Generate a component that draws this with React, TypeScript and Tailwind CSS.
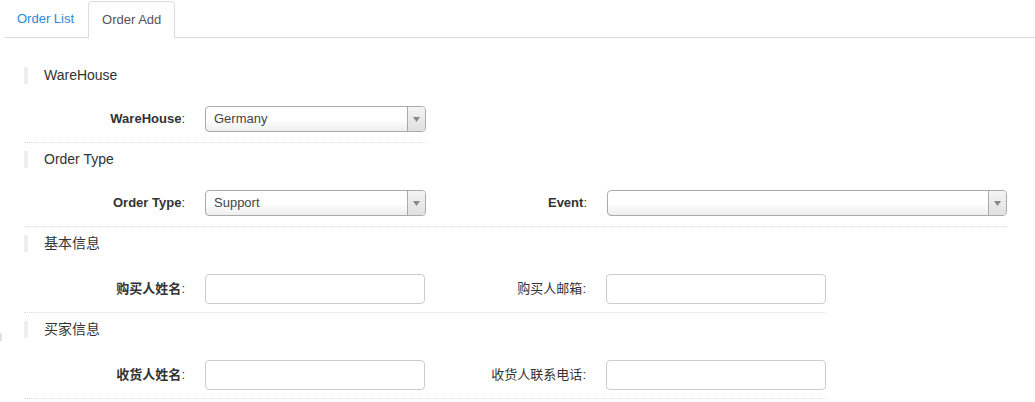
import React from 'react';

const font = { fontFamily: '"Liberation Sans", Arial, "Noto Sans CJK SC", sans-serif' };

const SectionTitle: React.FC<{ title: string; first?: boolean }> = ({ title, first }) => (
  <div className={`${first ? 'mt-[29px]' : 'mt-[8px]'} flex items-center h-[17px] border-l-4 border-[#eeeeee] pl-4 text-[14px] text-[#333]`}>
    {title}
  </div>
);

const Label: React.FC<{ text: string; bold?: boolean }> = ({ text, bold }) => (
  <div className="w-[181px] pr-[20px] text-right text-[13px] text-[#333] shrink-0 leading-[18px]">
    <span className={bold ? 'font-bold' : ''}>{text}</span>:
  </div>
);

const Select: React.FC<{ value?: string; width: string }> = ({ value, width }) => (
  <div className={`${width} h-[26px] flex border border-[#aaaaaa] rounded-[4px] bg-gradient-to-b from-white from-50% to-[#eeeeee] overflow-hidden`}>
    <div className="flex-1 flex items-center pl-2 text-[13px] text-[#444]">{value}</div>
    <div className="w-[18px] border-l border-[#aaaaaa] flex items-center justify-center bg-gradient-to-b from-[#f4f4f4] to-[#e0e0e0]">
      <svg width="7" height="5" viewBox="0 0 7 5"><path d="M0 0h7L3.5 5z" fill="#888" /></svg>
    </div>
  </div>
);

const Input: React.FC = () => (
  <div className="w-[220px] h-[30px] border border-[#cccccc] rounded-[4px] bg-white" />
);

const Row: React.FC<{ children: React.ReactNode; tall?: boolean }> = ({ children, tall }) => (
  <div className="flex">
    <div className={`flex items-center pt-[22px] ${tall ? 'pb-[8px]' : 'pb-[10px]'} border-b border-dotted border-[#dddddd]`}>
      {children}
    </div>
  </div>
);

const App: React.FC = () => {
  return (
    <div className="bg-white min-h-screen w-[1035px] h-[402px] overflow-hidden relative" style={font}>
      {/* Tabs */}
      <div className="ml-[4px] pt-[1px] flex border-b border-[#dddddd] h-[38px]">
        <div className="px-[13px] flex items-center text-[13px] text-[#2a8ad6] mr-[1px]">Order List</div>
        <div className="px-[13px] flex items-center text-[13px] text-[#555] bg-white border border-[#dddddd] border-b-white rounded-t-[4px] h-[38px]">
          Order Add
        </div>
      </div>

      <div className="pl-[24px]">
        <SectionTitle title="WareHouse" first />
        <Row>
          <Label text="WareHouse" bold />
          <Select value="Germany" width="w-[221px]" />
        </Row>

        <SectionTitle title="Order Type" />
        <Row>
          <Label text="Order Type" bold />
          <Select value="Support" width="w-[221px]" />
          <Label text="Event" bold />
          <Select width="w-[400px]" />
        </Row>

        <SectionTitle title="基本信息" />
        <Row tall>
          <Label text="购买人姓名" bold />
          <Input />
          <Label text="购买人邮箱" />
          <Input />
        </Row>

        <SectionTitle title="买家信息" />
        <Row tall>
          <Label text="收货人姓名" bold />
          <Input />
          <Label text="收货人联系电话" />
          <Input />
        </Row>
      </div>

      <div className="absolute left-0 top-[333px] w-[2px] h-[8px] bg-[#e0e0e0]" />
    </div>
  );
};

export default App;
